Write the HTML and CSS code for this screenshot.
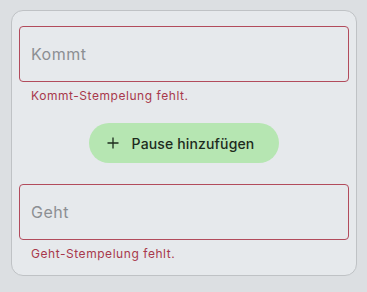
FILE: index.html
```html
<!DOCTYPE html>
<html>
<head>
<meta charset="utf-8">
<link rel="stylesheet" href="styles.css">
</head>
<body>
<div class="card">
  <div class="field">
    <div class="input"><span class="placeholder">Kommt</span></div>
    <div class="error">Kommt-Stempelung fehlt.</div>
  </div>
  <div class="actions">
    <button class="pill">
      <svg class="plus" width="12" height="12" viewBox="0 0 12 12"><path d="M6 0.5V11.5M0.5 6H11.5" stroke="#1d2b1d" stroke-width="1.3" fill="none"/></svg>
      <span>Pause hinzufügen</span>
    </button>
  </div>
  <div class="field">
    <div class="input"><span class="placeholder">Geht</span></div>
    <div class="error">Geht-Stempelung fehlt.</div>
  </div>
</div>
</body>
</html>
```
FILE: styles.css
```css
html, body {
  margin: 0;
  padding: 0;
  background: #dcdfe2;
  font-family: Inter, Roboto, "Liberation Sans", sans-serif;
}
body {
  padding: 10px 10px 0 11px;
  width: 367px;
  height: 292px;
  box-sizing: border-box;
}
.card {
  width: 346px;
  height: 266px;
  box-sizing: border-box;
  border: 1px solid #bfc2c5;
  border-radius: 12px;
  background: #e6e9ec;
  padding: 15px 7px 0 7px;
  display: flex;
  flex-direction: column;
}
.input {
  height: 56px;
  box-sizing: border-box;
  border: 1.5px solid #b24b5c;
  border-radius: 4px;
  display: flex;
  align-items: center;
  padding-left: 11px;
}
.placeholder {
  font-size: 16px;
  color: #8c8f93;
  letter-spacing: 0.5px;
}
.error {
  font-size: 12px;
  color: #a8384b;
  letter-spacing: 0.55px;
  padding: 6px 0 0 12px;
  line-height: 16px;
}
.actions {
  display: flex;
  justify-content: center;
  padding: 19px 0 21px 0;
}
.pill {
  height: 40px;
  width: 190px;
  border: none;
  border-radius: 20px;
  background: #b6e6b2;
  display: flex;
  align-items: center;
  justify-content: center;
  gap: 13px;
  padding: 0 7px 0 0;
  font-family: Inter, Roboto, "Liberation Sans", sans-serif;
  font-size: 14px;
  font-weight: 450;
  letter-spacing: 0.15px;
  color: #1d2b1d;
}
.plus {
  display: block;
}
```
